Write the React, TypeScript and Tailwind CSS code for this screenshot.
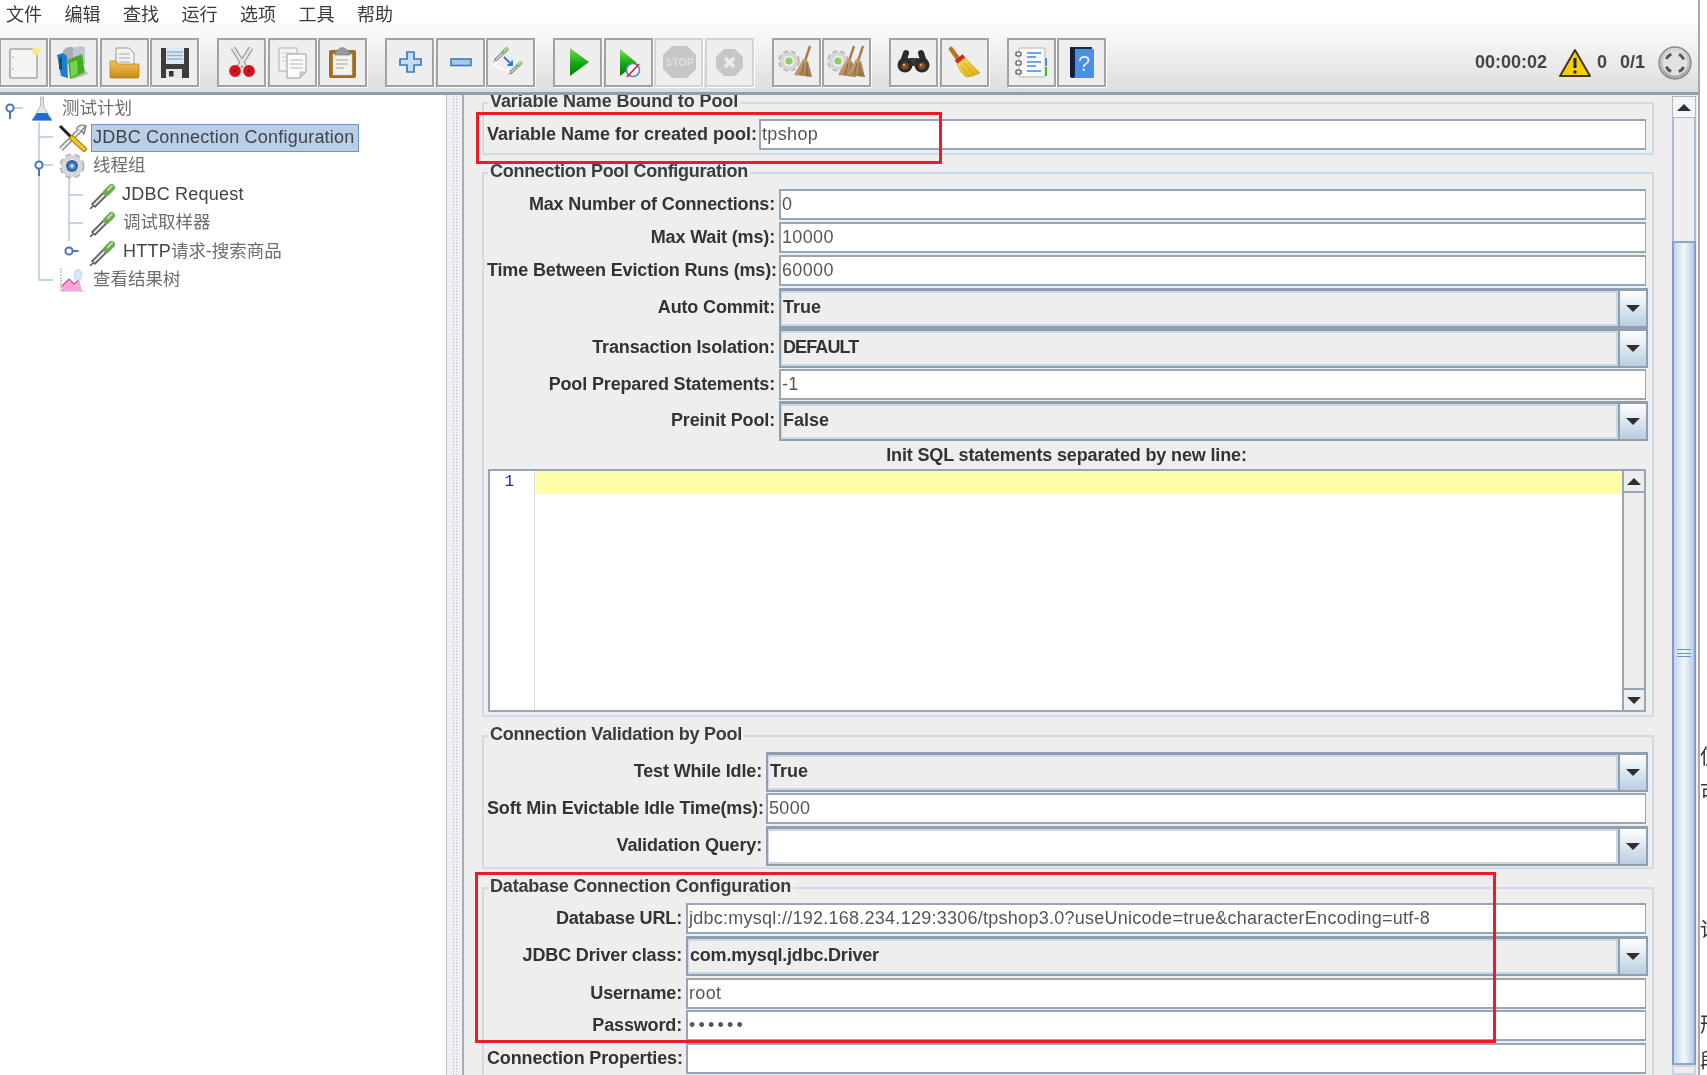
import React from "react";

const Defs = () => (
  <svg width="0" height="0" className="absolute">
    <defs>
      <linearGradient id="gPlay" x1="0" y1="0" x2="0" y2="1"><stop offset="0" stopColor="#7fdc5a" /><stop offset="0.55" stopColor="#12a812" /><stop offset="1" stopColor="#057a05" /></linearGradient>
      <linearGradient id="gFolder" x1="0" y1="0" x2="0" y2="1"><stop offset="0" stopColor="#f4c45a" /><stop offset="1" stopColor="#c98a18" /></linearGradient>
      <linearGradient id="gBroom" x1="0" y1="0" x2="1" y2="1"><stop offset="0" stopColor="#f7e25a" /><stop offset="1" stopColor="#e0a80c" /></linearGradient>
      <linearGradient id="gStraw" x1="0" y1="0" x2="1" y2="1"><stop offset="0" stopColor="#d3b48a" /><stop offset="1" stopColor="#9b6f3f" /></linearGradient>
      <linearGradient id="gFlask" x1="0" y1="0" x2="0" y2="1"><stop offset="0" stopColor="#d8dde2" /><stop offset="1" stopColor="#e6edf5" /></linearGradient>
      <linearGradient id="gDisc" x1="0" y1="0" x2="0" y2="1"><stop offset="0" stopColor="#d8d8d8" /><stop offset="1" stopColor="#a5a5a5" /></linearGradient>
      <radialGradient id="gCore"><stop offset="0" stopColor="#ffffff" /><stop offset="0.45" stopColor="#4f86c6" /><stop offset="1" stopColor="#1c4c8c" /></radialGradient>
    </defs>
  </svg>
);

const Ic = ({ children }: { children: React.ReactNode }) => (
  <svg viewBox="0 0 45 45" className="w-[45px] h-[45px] block">{children}</svg>
);

const Dropper = ({ x, y, s = 1 }: { x: number; y: number; s?: number }) => (
  <g transform={`translate(${x} ${y}) scale(${s})`}>
    <path d="M1 27 L5 23" stroke="#555" strokeWidth="1.6" />
    <path d="M4 24 L17 11" stroke="#5e5e5e" strokeWidth="5.6" />
    <path d="M5 23 L16 12" stroke="#e6e6e6" strokeWidth="2.2" />
    <path d="M17.5 10.5 L22.5 5.5" stroke="#6cab52" strokeWidth="7" strokeLinecap="round" />
    <path d="M19 8 L23 4" stroke="#b8e0a2" strokeWidth="2.2" strokeLinecap="round" />
  </g>
);

const Gear = ({ cx, cy, r }: { cx: number; cy: number; r: number }) => (
  <g>
    <circle cx={cx} cy={cy} r={r} fill="none" stroke="#b5b5b5" strokeWidth={r * 0.4} strokeDasharray={`${r * 0.5} ${r * 0.32}`} />
    <circle cx={cx} cy={cy} r={r * 0.82} fill="none" stroke="#d5d5d5" strokeWidth={r * 0.42} />
  </g>
);

const Straw = ({ dx = 0 }: { dx?: number }) => (
  <g transform={`translate(${dx} 0)`}>
    <path d="M36 6 L31 21" stroke="#a87b4a" strokeWidth="2.4" />
    <path d="M29 19 L34 21 L38 37 L20 35 Z" fill="url(#gStraw)" />
    <path d="M30 23 L27 35 M33 23 L33 36" stroke="#7d5833" strokeWidth="0.9" />
  </g>
);

const icons: Record<string, React.ReactNode> = {
  new: (
    <Ic>
      <rect x="9" y="9" width="27" height="29" rx="1" fill="#f5f5f3" stroke="#a9a9a3" strokeWidth="1.6" />
      <circle cx="35" cy="11" r="4" fill="#f5ec8a" opacity="0.95" />
      <circle cx="12" cy="17" r="0.8" fill="#999" />
      <circle cx="12" cy="29" r="0.8" fill="#999" />
    </Ic>
  ),
  templates: (
    <Ic>
      <path d="M12 11 Q16 6 22 7 L22 24 L12 24 Z" fill="#a8aeb5" />
      <path d="M22 8 Q28 5 34 7 L34 24 L22 24 Z" fill="#c2c6ca" />
      <path d="M6 15 L12 13 L16 16 L17 38 L10 36 Z" fill="#1f7fc4" />
      <path d="M8 18 L11 17 L11 30 L8 29 Z" fill="#0d4f8a" />
      <path d="M17 20 L31 14 L34 33 L19 39 Z" fill="#3fae1e" />
      <path d="M19 23 L26 20 L27 34 L20 37 Z" fill="#7bd24a" />
      <path d="M34 30 L38 34 L20 40 Z" fill="#9a9a9a" opacity="0.5" />
    </Ic>
  ),
  open: (
    <Ic>
      <path d="M14 8 L27 8 L32 13 L32 28 L14 28 Z" fill="#f3f3f3" stroke="#9a9a9a" />
      <path d="M17 14 H28 M17 18 H28 M17 22 H28" stroke="#a8a8a8" />
      <path d="M8 21 L14 21 L16 24 L37 24 L37 37 Q37 38 36 38 L9 38 Q8 38 8 37 Z" fill="url(#gFolder)" stroke="#b07a12" strokeWidth="0.7" />
    </Ic>
  ),
  save: (
    <Ic>
      <path d="M9 8 H37 V38 H9 Z" fill="#3c3c3e" />
      <rect x="14" y="8" width="18" height="16" fill="#dfe9f2" />
      <path d="M15 12 H31 M15 15.5 H31 M15 19 H31" stroke="#8fb4d8" strokeWidth="1.4" />
      <rect x="14" y="29" width="16" height="9" fill="#e5e5e5" />
      <rect x="17" y="31" width="4.5" height="5.5" fill="#333" />
    </Ic>
  ),
  cut: (
    <Ic>
      <path d="M14 8 L26 27" stroke="#8c8c8c" strokeWidth="5" />
      <path d="M32 8 L20 27" stroke="#8c8c8c" strokeWidth="5" />
      <path d="M14 8 L26 27" stroke="#e3e3e3" strokeWidth="3" />
      <path d="M32 8 L20 27" stroke="#e3e3e3" strokeWidth="3" />
      <circle cx="16" cy="31" r="3.6" fill="#8a1014" stroke="#d3151c" strokeWidth="4.6" />
      <circle cx="30" cy="31" r="3.6" fill="#8a1014" stroke="#d3151c" strokeWidth="4.6" />
    </Ic>
  ),
  copy: (
    <Ic>
      <rect x="9" y="8" width="18" height="23" fill="#f4f4f4" stroke="#b0b0b0" />
      <path d="M12 13 H24 M12 17 H24 M12 21 H24" stroke="#cfcfcf" />
      <path d="M17 14 H36 V32 L30 38 H17 Z" fill="#fbfbfb" stroke="#9c9c9c" />
      <path d="M30 38 L30 32 H36 Z" fill="#d5d5d5" stroke="#9c9c9c" strokeWidth="0.6" />
      <path d="M20 20 H33 M20 24 H33 M20 28 H33" stroke="#b5b5b5" />
    </Ic>
  ),
  paste: (
    <Ic>
      <rect x="9" y="10" width="27" height="28" rx="2" fill="#a9681c" />
      <rect x="13" y="14" width="19" height="21" fill="#f4f4ef" stroke="#c9c9c0" strokeWidth="0.6" />
      <path d="M16 20 H28 M16 24 H28 M16 28 H24" stroke="#a0a0a0" />
      <path d="M15 12 L18 10 Q22 5 27 10 L30 12 L30 15 H15 Z" fill="#9a9a9a" stroke="#6f6f6f" strokeWidth="0.6" />
    </Ic>
  ),
  plus: (
    <Ic>
      <path d="M20 12 H27 V19 H34 V25 H27 V32 H20 V25 H13 V19 H20 Z" fill="#c6dcf3" stroke="#3f78bc" strokeWidth="1.7" />
    </Ic>
  ),
  minus: (
    <Ic>
      <rect x="13" y="19" width="20" height="6.5" fill="#a8c8ea" stroke="#3f78bc" strokeWidth="1.6" />
    </Ic>
  ),
  toggle: (
    <Ic>
      <path d="M17 12 L6 25 L24 33" fill="none" stroke="#ffffff" strokeWidth="2" />
      <g opacity="0.8">
        <Dropper x={5} y={6} s={0.6} />
        <Dropper x={20} y={20} s={0.55} />
      </g>
      <path d="M16 17 L24 25 M24 20.5 V25 H19.5" fill="none" stroke="#2e74e0" strokeWidth="1.8" />
    </Ic>
  ),
  play: (
    <Ic>
      <path d="M15 8 L34 22 L15 36 Z" fill="url(#gPlay)" />
    </Ic>
  ),
  noTimer: (
    <Ic>
      <path d="M14 9 L31 23 L14 36 Z" fill="url(#gPlay)" />
      <circle cx="27" cy="30" r="6.5" fill="#fff" stroke="#4f86cc" strokeWidth="1.6" />
      <path d="M21 37 L33 24" stroke="#e2222a" strokeWidth="1.8" />
    </Ic>
  ),
  stop: (
    <Ic>
      <path d="M16 6 H31 L40 15 V29 L31 38 H16 L7 29 V15 Z" fill="#c6c6c6" />
      <text x="23.5" y="26" textAnchor="middle" fontSize="10.5" fontWeight="700" fill="#dedede" fontFamily="'Liberation Sans',sans-serif">STOP</text>
    </Ic>
  ),
  shutdown: (
    <Ic>
      <path d="M17 9 H28 L36 17 V28 L28 36 H17 L9 28 V17 Z" fill="#c6c6c6" />
      <path d="M18 18 L27 27 M27 18 L18 27" stroke="#ececec" strokeWidth="3.6" />
    </Ic>
  ),
  clear: (
    <Ic>
      <Gear cx={15} cy={21} r={9} />
      <circle cx="15" cy="21" r="3.6" fill="#8fce5a" />
      <Straw />
    </Ic>
  ),
  clearAll: (
    <Ic>
      <Gear cx={14} cy={21} r={9} />
      <circle cx="14" cy="21" r="3.6" fill="#8fce5a" />
      <Straw dx={-6} />
      <Straw dx={3} />
    </Ic>
  ),
  find: (
    <Ic>
      <path d="M15 13 L12 22 M30 13 L33 22" stroke="#2a2a2a" strokeWidth="6" strokeLinecap="round" />
      <rect x="18" y="18" width="9" height="8" fill="#3a3a3a" />
      <circle cx="14" cy="25" r="7.5" fill="#2c2c2c" />
      <circle cx="31" cy="25" r="7.5" fill="#2c2c2c" />
      <circle cx="14" cy="26" r="3.6" fill="#8a4a1a" />
      <circle cx="31" cy="26" r="3.6" fill="#8a4a1a" />
      <circle cx="13" cy="25" r="1.2" fill="#d9a070" />
      <circle cx="30" cy="25" r="1.2" fill="#d9a070" />
    </Ic>
  ),
  broom: (
    <Ic>
      <path d="M9 9 L17 20" stroke="#b8761e" strokeWidth="4.5" strokeLinecap="round" />
      <path d="M14 22 L22 16" stroke="#d5252a" strokeWidth="4.5" />
      <path d="M15 24 L23 18 L38 33 Q30 37 24 37 Q18 32 15 24 Z" fill="url(#gBroom)" stroke="#c9960a" strokeWidth="0.6" />
      <path d="M19 26 L27 36 M22 23 L32 35" stroke="#c9960a" strokeWidth="0.8" />
    </Ic>
  ),
  list: (
    <Ic>
      <rect x="35" y="18" width="3" height="8" fill="#2f7fd0" />
      <rect x="35" y="27" width="3" height="9" fill="#3da52a" />
      <rect x="10" y="8" width="26" height="29" rx="1" fill="#fafafa" stroke="#b5b5b5" />
      <path d="M18 13 H32 M18 17 H27 M18 22 H32 M18 26 H27 M18 31 H32" stroke="#3c8ae0" strokeWidth="1.7" />
      <g fill="#fff" stroke="#444" strokeWidth="1.2">
        <rect x="7" y="12" width="5" height="4" rx="1" />
        <rect x="7" y="21" width="5" height="4" rx="1" />
        <rect x="7" y="30" width="5" height="4" rx="1" />
      </g>
    </Ic>
  ),
  help: (
    <Ic>
      <path d="M11 7 H33 V36 H11 Z" fill="#1b2a44" />
      <rect x="15" y="9" width="20" height="29" rx="1" fill="#4a8fe0" />
      <rect x="11" y="8" width="5" height="30" rx="2" fill="#13203a" />
      <text x="25" y="31" textAnchor="middle" fontSize="22" fill="#dfeeff" fontFamily="'Liberation Sans',sans-serif">?</text>
    </Ic>
  ),
};

const TB = ({ name, off }: { name: string; off?: boolean }) => (
  <div className={`w-[49px] h-[49px] shrink-0 border-2 bg-[#eeeeee] shadow-[1px_1px_0_#ffffff] ${off ? "border-[#d4d4d4]" : "border-[#a3a3a3]"}`}>
    {icons[name]}
  </div>
);

const groups: { name: string; off?: boolean }[][] = [
  [{ name: "new" }, { name: "templates" }, { name: "open" }, { name: "save" }],
  [{ name: "cut" }, { name: "copy" }, { name: "paste" }],
  [{ name: "plus" }, { name: "minus" }, { name: "toggle" }],
  [{ name: "play" }, { name: "noTimer" }, { name: "stop", off: true }, { name: "shutdown", off: true }],
  [{ name: "clear" }, { name: "clearAll" }],
  [{ name: "find" }, { name: "broom" }],
  [{ name: "list" }, { name: "help" }],
];

const Arrow = ({ up }: { up?: boolean }) => (
  <svg width="14" height="7" viewBox="0 0 14 7" className="block">
    <path d={up ? "M7 0 L14 7 H0 Z" : "M0 0 H14 L7 7 Z"} fill="#2f2f2f" />
  </svg>
);

const Label = ({ children, wide, cls = "" }: { children: React.ReactNode; wide?: boolean; cls?: string }) => (
  <div className={`text-right font-bold text-[18px] leading-none text-[#333333] whitespace-nowrap ${wide ? "" : "tracking-[-0.15px]"} ${cls}`}>{children}</div>
);

const Field = ({ label, value, cols, cls = "", vcls = "tracking-[0.35px]", wide }: { label: string; value: string; cols: string; cls?: string; vcls?: string; wide?: boolean }) => (
  <div className={`grid gap-x-1 items-center h-[31px] ${cols} ${cls}`}>
    <Label wide={wide} cls="pb-[1px]">{label}</Label>
    <div className={`h-full flex items-center bg-white border border-t-2 border-l-2 border-b-2 border-[#97a6b4] pl-[1px] text-[18px] text-[#555555] whitespace-nowrap overflow-hidden ${vcls}`}>
      {value}
    </div>
  </div>
);

const Combo = ({ label, value, cols, cls = "", vcls = "", white }: { label: string; value: string; cols: string; cls?: string; vcls?: string; white?: boolean }) => (
  <div className={`grid gap-x-1 items-center h-[40px] -mr-[2px] ${cols} ${cls}`}>
    <Label cls="pb-[3px]">{label}</Label>
    <div className="h-full flex border-2 border-t-[3px] border-[#8f9fae]">
      <div className={`flex-1 flex items-center pl-[1px] pb-[3px] font-bold text-[18px] text-[#333333] border-2 border-[#c8d8e8] border-l-[1px] ${vcls} ${white ? "bg-white" : "bg-[#eeeeee]"}`}>{value}</div>
      <div className="w-[28px] flex items-center justify-center border-l-2 border-[#8f9fae] bg-gradient-to-b from-[#ffffff] to-[#b9cde2]">
        <Arrow />
      </div>
    </div>
  </div>
);

const Section = ({ title, cls, tcls, children }: { title: string; cls: string; tcls: string; children: React.ReactNode }) => (
  <div className={`relative shrink-0 border-2 border-[#cddcea] pl-[3px] pr-[6px] ${cls}`}>
    <div className={`absolute left-[4px] -top-[13px] px-[2px] bg-[#eeeeee] font-bold text-[18px] leading-[20px] text-[#3c3c3c] whitespace-nowrap ${tcls}`}>{title}</div>
    {children}
  </div>
);

const Row = ({ pl, children }: { pl: string; children: React.ReactNode }) => (
  <div className={`h-[28.5px] flex items-center whitespace-nowrap ${pl}`}>{children}</div>
);

const TText = ({ children, cjk }: { children: React.ReactNode; cjk?: boolean }) => (
  <span className={`leading-none ${cjk ? "text-[17.5px] text-[#6e6e6e]" : "text-[18px] text-[#444444] tracking-[0.22px]"}`}>{children}</span>
);

const Flask = () => (
  <svg width="22" height="26" viewBox="0 0 22 26" className="shrink-0">
    <path d="M9.5 1 H12.5 V10 L21 24 H1 L9.5 10 Z" fill="url(#gFlask)" stroke="#a9b2bb" strokeWidth="0.8" />
    <path d="M6 17 H16 L21 24.5 H1 Z" fill="#1f6ccc" />
  </svg>
);
const Tools = () => (
  <svg width="29" height="29" viewBox="0 0 29 29" className="shrink-0">
    <path d="M3 26 L22 7" stroke="#777" strokeWidth="5" />
    <path d="M3 26 L22 7" stroke="#e6e6e6" strokeWidth="2.6" />
    <path d="M18 6 Q22 0 28 3 L23 8 L26 11 Q28 3 28 3" fill="#ddd" stroke="#777" strokeWidth="1.2" />
    <path d="M2 3 L14 15" stroke="#222" strokeWidth="3" />
    <path d="M14 15 L26 26" stroke="#a87a10" strokeWidth="5.6" strokeLinecap="round" />
    <path d="M14 15 L26 26" stroke="#f2c52a" strokeWidth="3.4" strokeLinecap="round" />
  </svg>
);
const TreeGear = () => (
  <svg width="28" height="28" viewBox="0 0 28 28" className="shrink-0">
    <Gear cx={14} cy={14} r={10.5} />
    <circle cx="14" cy="14" r="6" fill="url(#gCore)" />
  </svg>
);
const TreeDropper = () => (
  <svg width="28" height="28" viewBox="0 0 28 28" className="shrink-0">
    <Dropper x={1} y={1} s={1} />
  </svg>
);
const TreeChart = () => (
  <svg width="25" height="26" viewBox="0 0 25 26" className="shrink-0">
    <path d="M2 1 V24 H25" fill="none" stroke="#9a9a9a" strokeWidth="1" strokeDasharray="2 1" />
    <path d="M3 24 L3 19 L10 12 L15 17 L20 13 L23 24 Z" fill="#f3a6dc" />
    <path d="M3 19 L10 12 L15 17 L21 12" fill="none" stroke="#d8488a" strokeWidth="1.2" />
    <ellipse cx="19" cy="8" rx="4" ry="5.5" fill="#d6e6f7" stroke="#a9c6e6" strokeWidth="0.6" />
  </svg>
);

const TreeLines = () => (
  <svg className="absolute left-0 top-0 w-[100px] h-[200px]" viewBox="0 0 100 200" fill="none">
    <g stroke="#aac6e4" strokeWidth="1.4">
      <path d="M39 27 V185 H53" />
      <path d="M39 42 H53" />
      <path d="M44 70 H53" />
      <path d="M69 82 V146" />
      <path d="M69 100 H83" />
      <path d="M69 128 H83" />
      <path d="M14 13 H23" />
      <path d="M74 156 H80" />
    </g>
    <g stroke="#4a74bc" strokeWidth="2" fill="#fff">
      <path d="M10 17 V24" />
      <circle cx="10" cy="13" r="3.6" />
      <path d="M39 74 V81" />
      <circle cx="39" cy="70" r="3.6" />
      <path d="M73 156 H78" />
      <circle cx="69" cy="156" r="3.6" />
    </g>
  </svg>
);

const menus = ["文件", "编辑", "查找", "运行", "选项", "工具", "帮助"];
const s2 = "grid-cols-[288px_1fr]";
const s3 = "grid-cols-[275px_1fr]";
const s4 = "grid-cols-[195px_1fr]";

export default function App() {
  return (
    <div className="relative w-[1707px] h-[1075px] overflow-hidden flex bg-white blur-[0.4px] font-['Liberation_Sans','Noto_Sans_CJK_SC',sans-serif]">
      <Defs />
      <div className="w-[1698px] shrink-0 h-full flex flex-col">
        <div className="h-[92px] shrink-0 bg-gradient-to-b from-[#ffffff] from-20% to-[#dddddd] flex flex-col">
          <div className="h-[30px] flex items-center pl-[6px] gap-[22.5px] text-[18px] text-[#3a3a3a] leading-none">
            {menus.map((m) => (
              <span key={m}>{m}</span>
            ))}
          </div>
          <div className="flex items-center h-[49px] mt-[8px] -ml-[1.5px] gap-[18px]">
            {groups.map((g, i) => (
              <div key={i} className="flex gap-[1.5px]">
                {g.map((b) => (
                  <TB key={b.name} name={b.name} off={b.off} />
                ))}
              </div>
            ))}
            <div className="ml-auto flex items-center pr-[6px] text-[18px] font-bold text-[#444444]">
              <span className="mr-[12px]">00:00:02</span>
              <svg width="32" height="30" viewBox="0 0 32 30" className="mr-[6px]">
                <path d="M16 2 L31 28 H1 Z" fill="#f7cf00" stroke="#3a3a20" strokeWidth="2" strokeLinejoin="round" />
                <path d="M16 10 V20" stroke="#222" strokeWidth="3" />
                <circle cx="16" cy="24" r="1.7" fill="#222" />
              </svg>
              <span className="mr-[13px]">0</span>
              <span className="mr-[13px]">0/1</span>
              <svg width="34" height="34" viewBox="0 0 34 34">
                <circle cx="17" cy="17" r="16" fill="url(#gDisc)" stroke="#8a8a8a" strokeWidth="1.4" />
                <circle cx="17" cy="17" r="12.5" fill="#e2e2e2" />
                <circle cx="17" cy="17" r="9.5" fill="none" stroke="#555" strokeWidth="3" strokeDasharray="7 7.92" strokeDashoffset="-3.95" />
              </svg>
            </div>
          </div>
        </div>
        <div className="flex-1 min-h-0 flex border-t-[3px] border-[#8d9dab]">
          <div className="relative w-[447px] shrink-0 bg-white border-r border-[#c5c5c5]">
            <TreeLines />
            <div className="relative">
              <Row pl="pl-[31px]">
                <Flask />
                <span className="ml-[9px]"><TText cjk>测试计划</TText></span>
              </Row>
              <Row pl="pl-[58px]">
                <Tools />
                <span className="ml-[4px] h-[28px] w-[268px] flex items-center pl-[1px] pb-[2px] bg-[#b8cfe6] border border-[#6f92d0]"><TText>JDBC Connection Configuration</TText></span>
              </Row>
              <Row pl="pl-[58px]">
                <TreeGear />
                <span className="ml-[7px]"><TText cjk>线程组</TText></span>
              </Row>
              <Row pl="pl-[88px]">
                <TreeDropper />
                <span className="ml-[6px]"><TText>JDBC Request</TText></span>
              </Row>
              <Row pl="pl-[88px]">
                <TreeDropper />
                <span className="ml-[7px]"><TText cjk>调试取样器</TText></span>
              </Row>
              <Row pl="pl-[88px]">
                <TreeDropper />
                <span className="ml-[7px]"><TText>HTTP</TText><TText cjk>请求-搜索商品</TText></span>
              </Row>
              <Row pl="pl-[59px]">
                <TreeChart />
                <span className="ml-[9px]"><TText cjk>查看结果树</TText></span>
              </Row>
            </div>
          </div>
          <div className="w-[15px] shrink-0 bg-[#f0f0f0] flex justify-center">
            <div className="w-[6px] h-full bg-[radial-gradient(#b5b5b5_0.8px,transparent_1px)] bg-[length:3px_3px]" />
          </div>
          <div className="flex-1 min-w-0 flex border-l-2 border-[#a3adb6] bg-[#eeeeee]">
            <div className="flex-1 min-w-0 overflow-hidden pl-[18px] pr-[18px] pt-[7px] flex flex-col">
              <Section title="Variable Name Bound to Pool" tcls="tracking-[-0.11px]" cls="h-[53px] pt-[15px]">
                <Field label="Variable Name for created pool:" value="tpshop" cols="grid-cols-[268px_1fr]" wide />
              </Section>
              <Section title="Connection Pool Configuration" tcls="tracking-[-0.28px]" cls="h-[545px] mt-[17px] pt-[15px]">
                <Field label="Max Number of Connections:" value="0" cols={s2} cls="mb-[2px]" />
                <Field label="Max Wait (ms):" value="10000" cols={s2} cls="mb-[2px]" />
                <Field label="Time Between Eviction Runs (ms):" value="60000" cols={s2} cls="mb-[2px]" />
                <Combo label="Auto Commit:" value="True" cols={s2} />
                <Combo label="Transaction Isolation:" value="DEFAULT" cols={s2} cls="mb-[1px]" vcls="tracking-[-0.9px]" />
                <Field label="Pool Prepared Statements:" value="-1" cols={s2} cls="mb-[1px]" />
                <Combo label="Preinit Pool:" value="False" cols={s2} />
                <div className="h-[28px] flex items-center justify-center font-bold text-[18px] tracking-[-0.15px] text-[#333333]">Init SQL statements separated by new line:</div>
                <div className="ml-[1px] h-[243px] flex border-2 border-[#97a6b4] bg-white">
                  <div className="w-[45px] shrink-0 border-r border-[#dddddd] pr-[20px] text-right text-[16px] leading-[22px] text-[#1a2f9c] font-['Liberation_Mono',monospace]">1</div>
                  <div className="flex-1 min-w-0"><div className="h-[23px] bg-[#ffffaa]" /></div>
                  <div className="w-[22px] shrink-0 flex flex-col border-l-2 border-[#97a6b4] bg-[#eeeeee]">
                    <div className="h-[22px] flex items-center justify-center border-b-2 border-[#97a6b4]"><Arrow up /></div>
                    <div className="flex-1" />
                    <div className="h-[22px] flex items-center justify-center border-t-2 border-[#97a6b4]"><Arrow /></div>
                  </div>
                </div>
              </Section>
              <Section title="Connection Validation by Pool" tcls="tracking-[-0.24px]" cls="h-[134px] mt-[18px] pt-[15px]">
                <Combo label="Test While Idle:" value="True" cols={s3} cls="mb-[1px]" />
                <Field label="Soft Min Evictable Idle Time(ms):" value="5000" cols={s3} cls="mb-[2px]" />
                <Combo label="Validation Query:" value="" cols={s3} white />
              </Section>
              <Section title="Database Connection Configuration" tcls="tracking-[-0.18px]" cls="h-[240px] mt-[18px] pt-[14px]">
                <Field label="Database URL:" value="jdbc:mysql://192.168.234.129:3306/tpshop3.0?useUnicode=true&characterEncoding=utf-8" cols={s4} cls="mb-[2px]" vcls="tracking-[0.26px]" />
                <Combo label="JDBC Driver class:" value="com.mysql.jdbc.Driver" cols={s4} cls="mb-[2px]" vcls="tracking-[-0.2px]" />
                <Field label="Username:" value="root" cols={s4} cls="mb-[1px]" />
                <Field label="Password:" value="••••••" cols={s4} cls="mb-[2px]" vcls="text-[14px] tracking-[3.2px]" />
                <Field label="Connection Properties:" value="" cols={s4} />
              </Section>
            </div>
            <div className="w-[26px] shrink-0 flex flex-col pt-[1px] bg-[#eeeeee] pr-[2px]">
              <div className="h-[22px] shrink-0 flex items-center justify-center border border-[#aeb9c4] bg-[#f4f6f8]"><Arrow up /></div>
              <div className="h-[123px] shrink-0 border-x-2 border-[#a9bbd0]" />
              <div className="h-[824px] shrink-0 border-2 border-x-[#7f9bd0] border-y-[#8fa5c4] bg-gradient-to-r from-[#c3d6ec] via-[#f3f7fb] to-[#b7cce4] flex items-center justify-center">
                <div className="w-[14px] h-[8px] border-y border-[#6f8fcf] flex items-center"><div className="w-full h-px bg-[#6f8fcf]" /></div>
              </div>
              <div className="flex-1 border-2 border-[#cfd6dd]" />
            </div>
          </div>
        </div>
      </div>
      <div className="w-[2px] shrink-0 h-full bg-[#a9a9a9]" />
      <div className="flex-1 min-w-0 overflow-hidden flex flex-col pt-[746px] text-[20px] leading-[22px] text-[#333333]">
        <span className="h-[36px] shrink-0">使</span>
        <span className="h-[137px] shrink-0">可</span>
        <span className="h-[95px] shrink-0">论</span>
        <span className="h-[36px] shrink-0">形</span>
        <span className="shrink-0">段</span>
      </div>
      <div className="absolute left-[476px] top-[112px] w-[466px] h-[52px] border-[3px] border-[#ed1c24]" />
      <div className="absolute left-[475px] top-[872px] w-[1021px] h-[171px] border-[3px] border-[#ed1c24]" />
    </div>
  );
}
